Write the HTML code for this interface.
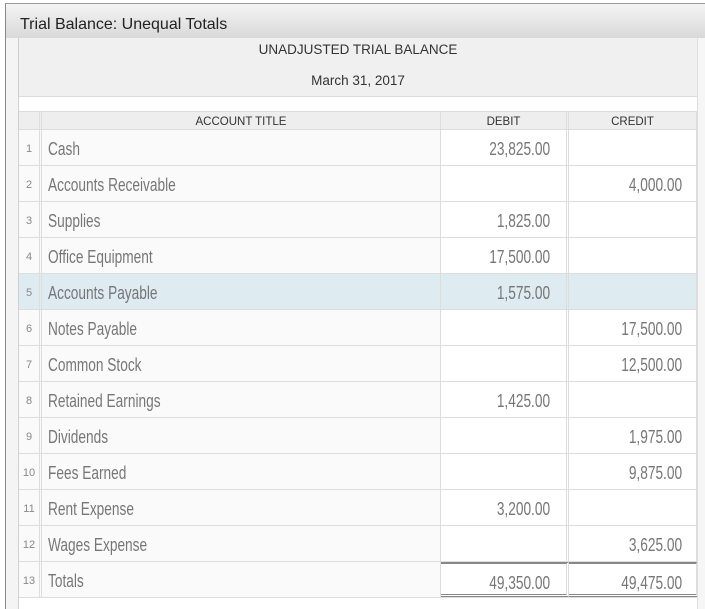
<!DOCTYPE html>
<html><head><style>
*{margin:0;padding:0;box-sizing:border-box}
body{width:705px;height:609px;background:#fff;position:relative;overflow:hidden;font-family:"Liberation Sans",sans-serif}
.abs{position:absolute}
.title{left:5px;top:3px;width:700px;height:35px;background:linear-gradient(#f4f4f4,#d9d9d9);border-left:1px solid #888;border-top:1px solid #999;font-size:16px;color:#222;padding:12px 0 0 14px}
.lstrip{left:5px;top:38px;width:14px;height:571px;background:#f4f4f4;border-left:1px solid #888;border-right:1px solid #d0d0d0}
.rstrip{left:697px;top:38px;width:8px;height:571px;background:#f6f6f6;border-left:1px solid #ddd}
.hdr{left:19px;top:38px;width:678px;height:59px;background:#f0f0f0;border-bottom:1px solid #ddd;text-align:center;font-size:13.5px;color:#333}
.row{left:19px;width:678px;height:36px;border-bottom:1px solid #ddd;background:#fafafa}
.cell{position:absolute;top:0;height:100%;font-size:18px;color:#777;line-height:39px}
.n{left:0;width:23px;border-right:3px double #ddd;text-align:center;font-size:11px;color:#888;line-height:38px}
.t{left:23px;width:399px;padding-left:6px;border-right:1px solid #ddd}
.t span,.d span{display:inline-block;transform:scaleX(.76);transform-origin:left}
.d{left:422px;width:128px;border-right:3px double #ddd;text-align:right;padding-right:16px;background:#fff}
.c{left:550px;width:128px;text-align:right;padding-right:14px;background:#fff;border-right:1px solid #ddd}
.d span{transform-origin:right}
.ch{height:19px;background:#eee}
.ch .cell{font-size:11.5px;line-height:20px;color:#333;text-align:center;background:#eee;padding:0}
</style></head><body>
<div class="abs title">Trial Balance: Unequal Totals</div>
<div class="abs lstrip"></div>
<div class="abs rstrip"></div>
<div class="abs hdr"><div style="margin-top:4px">UNADJUSTED TRIAL BALANCE</div><div style="margin-top:16px">March 31, 2017</div></div>
<div class="abs row ch" style="top:111px;border-top:1px solid #ddd"><div class="cell n" style="border-right:3px double #ddd"></div><div class="cell t">ACCOUNT TITLE</div><div class="cell d">DEBIT</div><div class="cell c">CREDIT</div></div>
<div id="rows"></div>
<script>
var r=[["Cash","23,825.00",""],["Accounts Receivable","","4,000.00"],["Supplies","1,825.00",""],["Office Equipment","17,500.00",""],["Accounts Payable","1,575.00",""],["Notes Payable","","17,500.00"],["Common Stock","","12,500.00"],["Retained Earnings","1,425.00",""],["Dividends","","1,975.00"],["Fees Earned","","9,875.00"],["Rent Expense","3,200.00",""],["Wages Expense","","3,625.00"],["Totals","49,350.00","49,475.00"]];
var h="";r.forEach(function(x,i){var top=130+i*36;var hl=i==4?"background:#deebf0;":"";var tot=i==12?"border-top:2px solid #888;border-bottom:3px double #888;":"";
h+='<div class="abs row" style="top:'+top+'px;'+(i==4?"background:#deebf0":"")+'"><div class="cell n" style="'+hl+'">'+(i+1)+'</div><div class="cell t" style="'+hl+'"><span>'+x[0]+'</span></div><div class="cell d" style="'+hl+tot+'"><span>'+x[1]+'</span></div><div class="cell c" style="'+hl+tot+'"><span style="display:inline-block;transform:scaleX(.76);transform-origin:right">'+x[2]+'</span></div></div>';});
document.getElementById("rows").innerHTML=h;
</script>
</body></html>
